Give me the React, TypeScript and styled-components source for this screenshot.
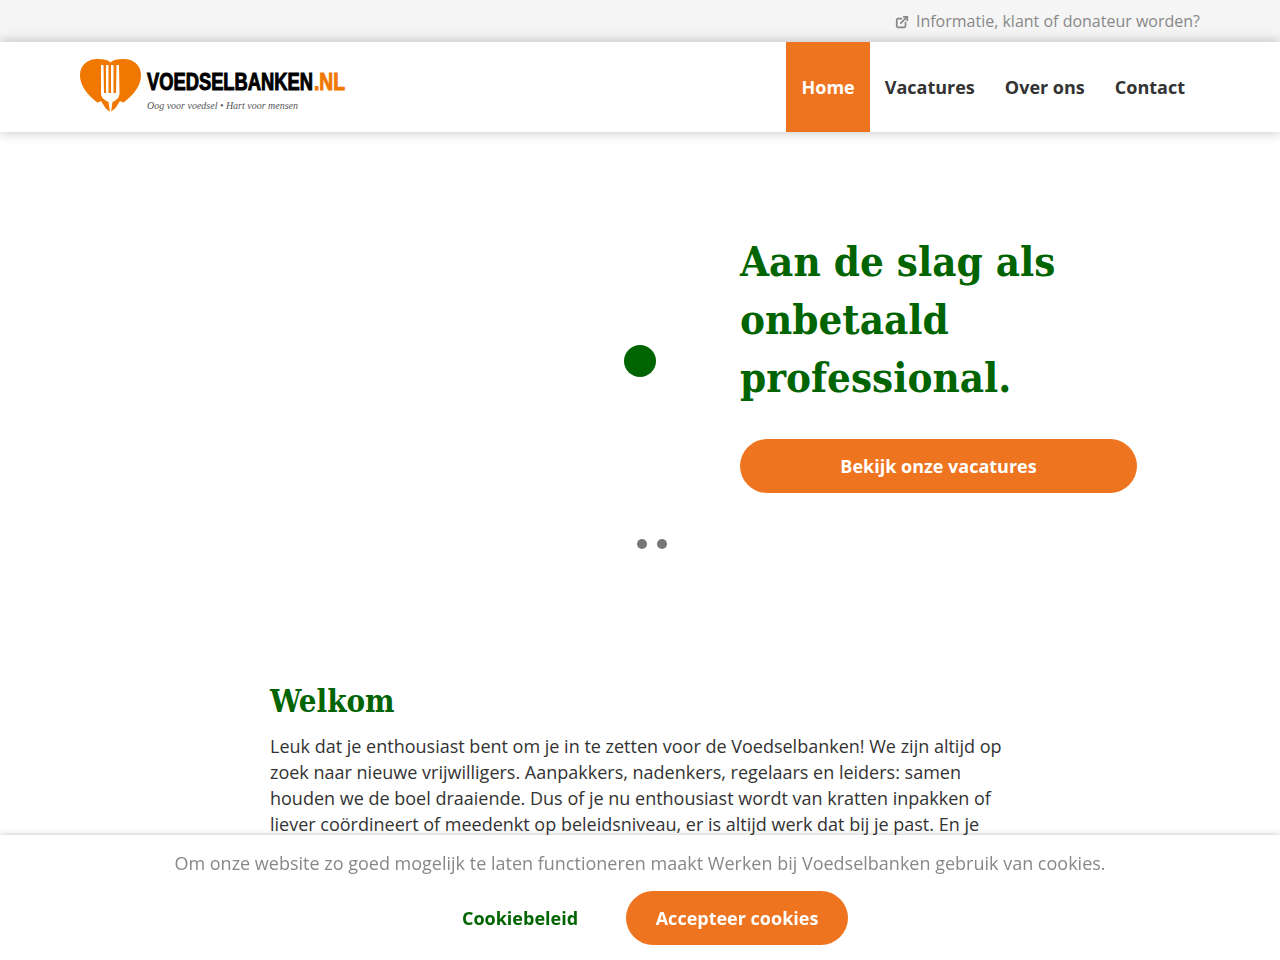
import styled, { createGlobalStyle } from "styled-components";
import { LuExternalLink } from "react-icons/lu";

const ORANGE = "#ee741f";
const GREEN = "#006400";
const HEADING_FONT = `"DejaVu Serif Condensed", "DejaVu Serif", serif`;

const GlobalStyle = createGlobalStyle`
  html, body {
    margin: 0;
    padding: 0;
    background: #fff;
    font-family: "Open Sans", sans-serif;
  }
`;

const TopBar = styled.div`
  height: 42px;
  background: #f5f5f5;
  display: flex;
  justify-content: flex-end;
  align-items: center;
  padding-right: 80px;
  font-size: 16px;
  color: #888;
`;

const TopLink = styled.a`
  display: flex;
  align-items: center;
  gap: 7px;
  svg {
    width: 14px;
    height: 14px;
    stroke-width: 3;
    margin-top: 2px;
  }
`;

const Header = styled.header`
  position: relative;
  height: 90px;
  background: #fff;
  box-shadow: 0 0 12px rgba(0, 0, 0, 0.25);
  display: flex;
  justify-content: space-between;
  padding: 0 80px;
`;

const Logo = styled.svg`
  width: 300px;
  height: 56px;
  margin-top: 16px;
`;

const Nav = styled.nav`
  display: flex;
`;

const NavItem = styled.a<{ $active?: boolean }>`
  display: flex;
  align-items: center;
  padding: 0 15px;
  font-size: 18px;
  font-weight: 700;
  color: ${(p) => (p.$active ? "#fff" : "#333")};
  background: ${(p) => (p.$active ? ORANGE : "transparent")};
`;

const Hero = styled.section`
  display: grid;
  grid-template-columns: 624px 32px 1fr;
  align-items: start;
  height: 547px;
  padding-top: 100px;
  box-sizing: border-box;
`;

const Spinner = styled.div`
  width: 32px;
  height: 32px;
  margin-top: 113px;
  border-radius: 50%;
  background: ${GREEN};
  grid-column: 2;
`;

const Slide = styled.div`
  grid-column: 3;
  margin-left: 84px;
  width: 397px;
  position: relative;
`;

const HeroTitle = styled.h1`
  margin: 0 0 32px;
  padding-top: 1px;
  font-family: ${HEADING_FONT};
  font-size: 41.7px;
  line-height: 58px;
  font-weight: 700;
  color: ${GREEN};
`;

const Pill = styled.a`
  display: flex;
  justify-content: center;
  align-items: center;
  height: 54px;
  border-radius: 27px;
  background: ${ORANGE};
  color: #fff;
  font-size: 18px;
  font-weight: 700;
`;

const HeroButton = styled(Pill)`
  width: 397px;
`;

const Pager = styled.div`
  position: absolute;
  left: -103px;
  top: 307px;
  display: flex;
  gap: 10px;
`;

const PagerDot = styled.span`
  width: 10px;
  height: 10px;
  border-radius: 50%;
  background: #777;
`;

const Content = styled.main`
  width: 740px;
  margin-left: 270px;
`;

const Title = styled.h2`
  margin: 0 0 10px;
  font-family: ${HEADING_FONT};
  font-size: 31px;
  line-height: 44px;
  font-weight: 700;
  color: ${GREEN};
`;

const Paragraph = styled.p`
  margin: 0;
  font-size: 18px;
  line-height: 26px;
  color: #333;
`;

const CookieBar = styled.div`
  position: fixed;
  left: 0;
  right: 0;
  bottom: 0;
  height: 125px;
  background: #fff;
  box-shadow: 0 0 6px rgba(0, 0, 0, 0.25);
  display: flex;
  flex-direction: column;
  align-items: center;
  padding-top: 14px;
  box-sizing: border-box;
`;

const CookieText = styled.div`
  font-size: 18px;
  line-height: 28px;
  color: #888;
`;

const CookieActions = styled.div`
  display: flex;
  align-items: center;
  gap: 48px;
  margin-top: 14px;
  padding-left: 30px;
`;

const CookieLink = styled.a`
  font-size: 18px;
  font-weight: 700;
  color: ${GREEN};
`;

const CookieButton = styled(Pill)`
  width: 222px;
`;

export default function App() {
  return (
    <>
      <GlobalStyle />
      <TopBar>
        <TopLink>
          <LuExternalLink />
          Informatie, klant of donateur worden?
        </TopLink>
      </TopBar>
      <Header>
        <Logo viewBox="0 0 300 56">
          <path
            d="M30.5 54 C22 47 0 36 0 17 C0 7 8 1 17 1 C23 1 27.5 1.500 30.5 4.500 C33.5 1.500 38 1 44 1 C53 1 61 7 61 17 C61 36 39 47 30.5 54 Z"
            fill="#f07800"
          />
          <path
            d="M21 7 h2.5 l0.5 28 h2 V7 h2.5 v28 h2.5 V7 h2.5 v28 h2.5 l0.5 -28 H39 l0.500 28 c0 5 -3 7 -7 9 l-1.500 10 h-1 l-1.500 -10 c-4 -2 -7.5 -4 -7.5 -9 Z"
            fill="#fff"
          />
          <path d="M21 43 L28 54 L26 54 L17 45 Z M40 43 L33 54 L35 54 L44 45 Z" fill="#fff" />
          <text
            transform="translate(67 32) scale(0.78 1)"
            fontFamily="Liberation Sans"
            fontWeight="700"
            fontSize="23.5"
            stroke="#000"
            strokeWidth="1"
          >
            VOEDSELBANKEN
          </text>
          <text
            transform="translate(234 32) scale(0.82 1)"
            fontFamily="Liberation Sans"
            fontWeight="700"
            fontSize="23.5"
            fill="#f07800"
            stroke="#f07800"
            strokeWidth="1"
          >
            .NL
          </text>
          <text
            x="67"
            y="51"
            fontFamily="Liberation Serif"
            fontStyle="italic"
            fontSize="11"
            fill="#555"
            textLength="151"
            lengthAdjust="spacingAndGlyphs"
          >
            Oog voor voedsel • Hart voor mensen
          </text>
        </Logo>
        <Nav>
          <NavItem $active>Home</NavItem>
          <NavItem>Vacatures</NavItem>
          <NavItem>Over ons</NavItem>
          <NavItem>Contact</NavItem>
        </Nav>
      </Header>
      <Hero>
        <Spinner />
        <Slide>
          <HeroTitle>
            Aan de slag als
            <br />
            onbetaald
            <br />
            professional.
          </HeroTitle>
          <HeroButton>Bekijk onze vacatures</HeroButton>
          <Pager>
            <PagerDot />
            <PagerDot />
          </Pager>
        </Slide>
      </Hero>
      <Content>
        <Title>Welkom</Title>
        <Paragraph>
          Leuk dat je enthousiast bent om je in te zetten voor de Voedselbanken! We zijn altijd op
          zoek naar nieuwe vrijwilligers. Aanpakkers, nadenkers, regelaars en leiders: samen
          houden we de boel draaiende. Dus of je nu enthousiast wordt van kratten inpakken of
          liever coördineert of meedenkt op beleidsniveau, er is altijd werk dat bij je past. En je
        </Paragraph>
      </Content>
      <CookieBar>
        <CookieText>
          Om onze website zo goed mogelijk te laten functioneren maakt Werken bij Voedselbanken
          gebruik van cookies.
        </CookieText>
        <CookieActions>
          <CookieLink>Cookiebeleid</CookieLink>
          <CookieButton>Accepteer cookies</CookieButton>
        </CookieActions>
      </CookieBar>
    </>
  );
}
